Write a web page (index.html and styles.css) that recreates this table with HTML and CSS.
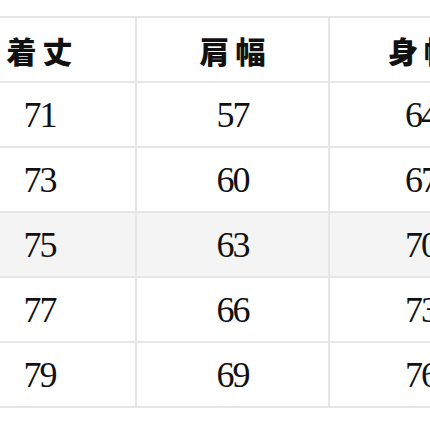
FILE: index.html
```html
<!DOCTYPE html>
<html lang="ja">
<head>
<meta charset="utf-8">
<link rel="stylesheet" href="styles.css">
</head>
<body>
<div class="wrap">
<table class="size">
  <colgroup><col class="c1"><col class="c2"><col class="c3"></colgroup>
  <tr class="head"><th>着丈</th><th>肩幅</th><th>身幅</th></tr>
  <tr><td>71</td><td>57</td><td>64</td></tr>
  <tr><td>73</td><td>60</td><td>67</td></tr>
  <tr class="alt"><td>75</td><td>63</td><td>70</td></tr>
  <tr><td>77</td><td>66</td><td>73</td></tr>
  <tr><td>79</td><td>69</td><td>76</td></tr>
</table>
</div>
</body>
</html>
```

FILE: styles.css
```css
html, body {
  margin: 0;
  padding: 0;
  background: #ffffff;
  overflow: hidden;
}
.wrap {
  width: 430px;
  height: 430px;
  overflow: hidden;
  padding-top: 16px;
  box-sizing: border-box;
}
.size {
  border-collapse: collapse;
  margin-left: -58px;
  table-layout: fixed;
  width: 570px;
}
.size col.c1, .size col.c2 { width: 193px; }
.size col.c3 { width: 184px; }
.size th, .size td {
  height: 63px;
  padding: 0;
  border: 2px solid #e6e6e6;
  text-align: center;
  vertical-align: middle;
  color: #111111;
}
.size th {
  font-family: "Noto Sans CJK JP", "Noto Sans CJK SC", sans-serif;
  font-weight: 900;
  font-size: 30px;
  letter-spacing: 6px;
  text-indent: 6px;
  line-height: 1;
}
.size td {
  font-family: "Liberation Serif", "DejaVu Serif", serif;
  font-size: 36px;
  letter-spacing: -2px;
  line-height: 1;
}
.size tr.alt td {
  background: #f4f4f4;
}
```
